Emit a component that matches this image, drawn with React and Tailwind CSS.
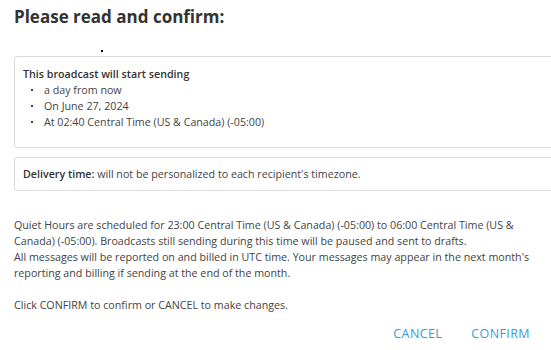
export default function App() {
  return (
    <div className="w-[551px] h-[350px] overflow-hidden bg-white text-[#444]" style={{ fontFamily: '"Open Sans", sans-serif' }}>
      <div className="pl-[14px] pt-[5px]">
        <h1 className="text-[17px] font-bold text-[#333] leading-[24px]">Please read and confirm:</h1>
        <div className="h-[27px] relative">
          <div className="absolute left-[87px] top-[21px] w-[2px] h-[2px] bg-black"></div>
        </div>
        <div className="w-[560px] border border-[#dcdcdc] rounded-[3px] pl-[8px] pt-[9px] pb-[17px]">
          <div className="text-[10.7px] leading-[16px] font-semibold text-[#333]">This broadcast will start sending</div>
          <ul className="text-[10.7px] leading-[16px] text-[#444]">
            {["a day from now", "On June 27, 2024", "At 02:40 Central Time (US & Canada) (-05:00)"].map((t) => (
              <li key={t} className="flex items-center">
                <span className="w-[2px] h-[2px] bg-[#444] ml-[8px] mr-[11px]"></span>
                <span>{t}</span>
              </li>
            ))}
          </ul>
        </div>
        <div className="w-[560px] mt-[9px] border border-[#dcdcdc] rounded-[3px] pl-[8px] pt-[8px] pb-[8px] text-[10.7px] leading-[16px]">
          <span className="font-semibold text-[#333]">Delivery time:</span> will not be personalized to each recipient's timezone.
        </div>
        <div className="mt-[26px] pr-[12px] text-[10.7px] leading-[16px] text-[#444]">
          <p>Quiet Hours are scheduled for 23:00 Central Time (US &amp; Canada) (-05:00) to 06:00 Central Time (US &amp; Canada) (-05:00). Broadcasts still sending during this time will be paused and sent to drafts.</p>
          <p>All messages will be reported on and billed in UTC time. Your messages may appear in the next month's reporting and billing if sending at the end of the month.</p>
          <p className="mt-[16px]">Click CONFIRM to confirm or CANCEL to make changes.</p>
        </div>
        <div className="flex justify-end gap-[29px] pr-[21px] mt-[13px] text-[12.5px] leading-[16px] text-[#3a9ad9] tracking-[0.4px]">
          <span>CANCEL</span>
          <span>CONFIRM</span>
        </div>
      </div>
    </div>
  );
}
